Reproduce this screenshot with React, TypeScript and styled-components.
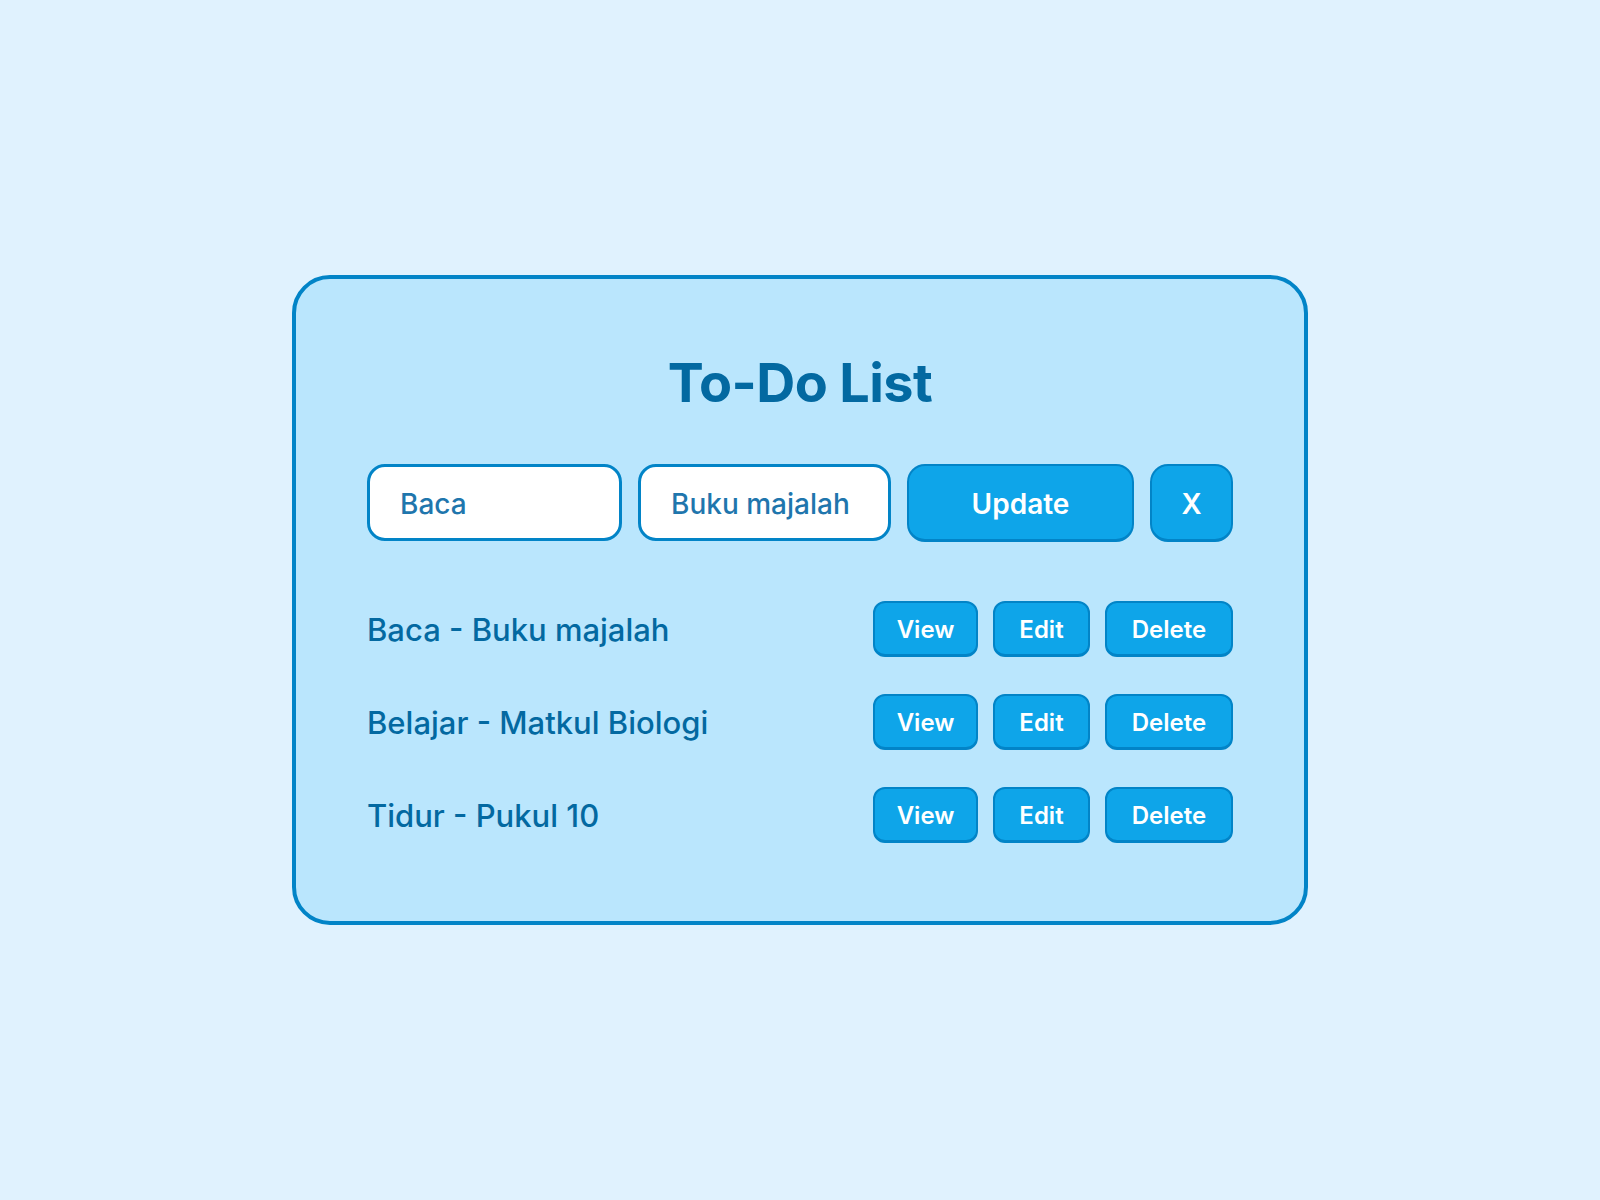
import React from "react";
import styled, { createGlobalStyle } from "styled-components";

const Global = createGlobalStyle`
  html, body { margin: 0; padding: 0; }
  body {
    background: #e0f2fe;
    font-family: Inter, "Noto Sans", "Liberation Sans", sans-serif;
  }
`;

const Page = styled.main`
  min-height: 1200px;
  display: flex;
  align-items: center;
  justify-content: center;
`;

const Card = styled.section`
  box-sizing: border-box;
  width: 1016px;
  height: 650px;
  background: #bae6fd;
  border: 4px solid #0284c7;
  border-radius: 38px;
  padding: 77px 71px 0;
  display: flex;
  flex-direction: column;
`;

const Title = styled.h1`
  margin: 0;
  text-align: center;
  font-size: 54px;
  line-height: 54px;
  font-weight: 700;
  color: #0369a1;
  letter-spacing: -0.6px;
`;

const Form = styled.form`
  margin-top: 54px;
  display: flex;
  gap: 16px;
  height: 77px;
`;

const Input = styled.input<{ $w: number }>`
  box-sizing: border-box;
  width: ${(p) => p.$w}px;
  height: 77px;
  border: 3px solid #0284c7;
  border-radius: 18px;
  background: #ffffff;
  padding: 2px 30px 0;
  font-family: inherit;
  font-size: 28px;
  font-weight: 500;
  color: #1f76ad;
  outline: none;
`;

const Button = styled.button<{ $w: number; $h: number; $fs: number; $r: number }>`
  box-sizing: border-box;
  width: ${(p) => p.$w}px;
  height: ${(p) => p.$h}px;
  background: #0ea5e9;
  border: 2px solid #0284c7;
  border-bottom-width: 3px;
  border-radius: ${(p) => p.$r}px;
  color: #ffffff;
  font-family: inherit;
  font-size: ${(p) => p.$fs}px;
  font-weight: 600;
  display: flex;
  align-items: center;
  justify-content: center;
  padding: 2px 0 0;
  cursor: pointer;
`;

const List = styled.ul`
  list-style: none;
  margin: 60px 0 0;
  padding: 0;
  display: flex;
  flex-direction: column;
  gap: 37px;
`;

const Row = styled.li`
  display: flex;
  align-items: center;
  justify-content: space-between;
  height: 56px;
`;

const ItemText = styled.span`
  font-size: 31px;
  font-weight: 500;
  color: #0369a1;
`;

const Actions = styled.div`
  display: flex;
  gap: 15px;
`;

const items = [
  "Baca - Buku majalah",
  "Belajar - Matkul Biologi",
  "Tidur - Pukul 10",
];

export default function App() {
  return (
    <>
      <Global />
      <Page>
        <Card>
          <Title>To-Do List</Title>
          <Form onSubmit={(e) => e.preventDefault()}>
            <Input $w={255} defaultValue="Baca" />
            <Input $w={253} defaultValue="Buku majalah" />
            <Button type="submit" $w={227} $h={78} $fs={28} $r={18}>
              Update
            </Button>
            <Button type="button" $w={83} $h={78} $fs={28} $r={18}>
              X
            </Button>
          </Form>
          <List>
            {items.map((t) => (
              <Row key={t}>
                <ItemText>{t}</ItemText>
                <Actions>
                  <Button type="button" $w={105} $h={56} $fs={24} $r={12}>
                    View
                  </Button>
                  <Button type="button" $w={97} $h={56} $fs={24} $r={12}>
                    Edit
                  </Button>
                  <Button type="button" $w={128} $h={56} $fs={24} $r={12}>
                    Delete
                  </Button>
                </Actions>
              </Row>
            ))}
          </List>
        </Card>
      </Page>
    </>
  );
}
